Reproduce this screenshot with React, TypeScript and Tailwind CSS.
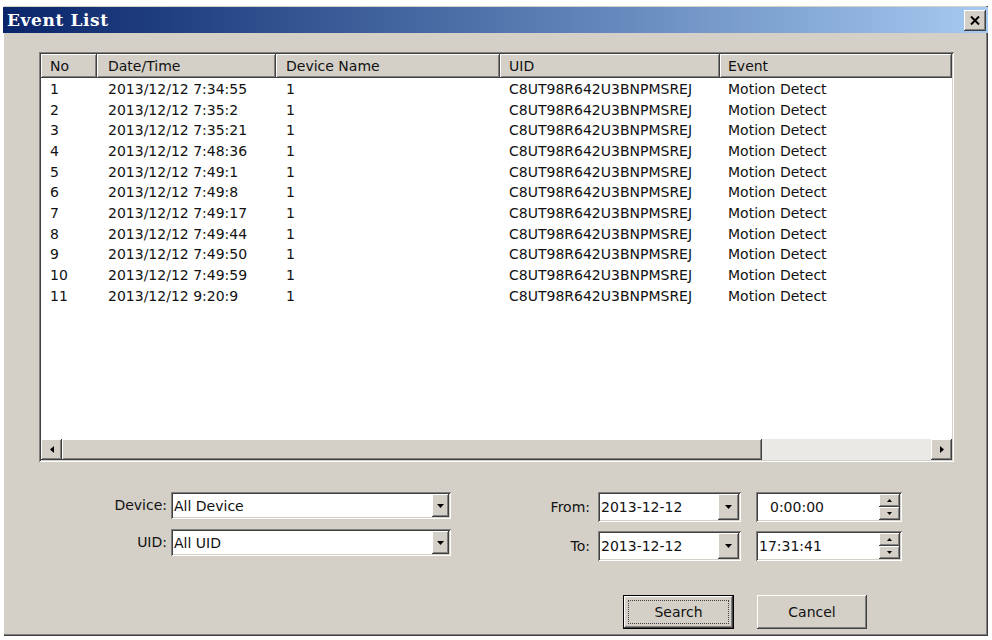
import React from 'react';

const raised =
  'bg-[#d4d0c8] shadow-[inset_-1px_-1px_0_#404040,inset_1px_1px_0_#ffffff,inset_-2px_-2px_0_#808080,inset_2px_2px_0_#d4d0c8]';
const sunken =
  'shadow-[inset_1px_1px_0_#808080,inset_-1px_-1px_0_#ffffff,inset_2px_2px_0_#404040,inset_-2px_-2px_0_#d4d0c8]';

const events = [
  ['1', '2013/12/12 7:34:55'],
  ['2', '2013/12/12 7:35:2'],
  ['3', '2013/12/12 7:35:21'],
  ['4', '2013/12/12 7:48:36'],
  ['5', '2013/12/12 7:49:1'],
  ['6', '2013/12/12 7:49:8'],
  ['7', '2013/12/12 7:49:17'],
  ['8', '2013/12/12 7:49:44'],
  ['9', '2013/12/12 7:49:50'],
  ['10', '2013/12/12 7:49:59'],
  ['11', '2013/12/12 9:20:9'],
];

const columns = [
  { label: 'No', cls: 'w-[56px] pl-[9px]' },
  { label: 'Date/Time', cls: 'w-[179px] pl-[11px]' },
  { label: 'Device Name', cls: 'w-[224px] pl-[10px]' },
  { label: 'UID', cls: 'w-[220px] pl-[9px]' },
  { label: 'Event', cls: 'flex-1 pl-[8px]' },
];

const Arrow: React.FC<{ dir: 'left' | 'right' | 'down' | 'up'; small?: boolean }> = ({ dir, small }) => {
  const pts = small
    ? { up: '0,3 5,3 2.5,0', down: '0,0 5,0 2.5,3', left: '3,0 3,5 0,2.5', right: '0,0 0,5 3,2.5' }[dir]
    : { up: '0,4 7,4 3.5,0', down: '0,0 7,0 3.5,4', left: '4,0 4,7 0,3.5', right: '0,0 0,7 4,3.5' }[dir];
  const horiz = dir === 'left' || dir === 'right';
  const w = small ? (horiz ? 3 : 5) : horiz ? 4 : 7;
  const h = small ? (horiz ? 5 : 3) : horiz ? 7 : 4;
  return (
    <svg width={w} height={h} viewBox={`0 0 ${w} ${h}`}>
      <polygon points={pts} fill="#000" />
    </svg>
  );
};

const ComboBox: React.FC<{ value: string; className: string; btn: string }> = ({ value, className, btn }) => (
  <div className={`relative flex items-center bg-white ${sunken} ${className}`}>
    <span className="pl-[3px] pt-[1px]">{value}</span>
    <div className={`ml-auto mr-[2px] self-stretch my-[2px] flex items-center justify-center ${raised} ${btn}`}>
      <Arrow dir="down" />
    </div>
  </div>
);

const TimeBox: React.FC<{ value: string; pad: string }> = ({ value, pad }) => (
  <div className={`flex items-center bg-white w-[146px] h-[30px] ${sunken}`}>
    <span className={pad}>{value}</span>
    <div className="ml-auto mr-[2px] my-[2px] self-stretch w-[21px] flex flex-col">
      <div className={`flex-1 flex items-center justify-center ${raised}`}>
        <Arrow dir="up" small />
      </div>
      <div className={`flex-1 flex items-center justify-center ${raised}`}>
        <Arrow dir="down" small />
      </div>
    </div>
  </div>
);

export default function App() {
  return (
    <div className="w-[992px] h-[640px] bg-white pt-[6px] pl-[3px] text-[14px] text-[#111] font-['DejaVu_Sans',sans-serif]">
      <div className="w-[985px] h-[630px] flex flex-col bg-[#d4d0c8] shadow-[inset_1px_0_0_#ffffff,inset_-1px_-1px_0_#404040,inset_-2px_-2px_0_#808080]">
        {/* Title bar */}
        <div className="mt-[1px] h-[26px] flex items-center bg-gradient-to-r from-[#0a246a] to-[#a6caf0]">
          <span className="pl-[4px] pt-[2px] text-white font-bold text-[17px] tracking-[0.6px] font-['DejaVu_Serif',serif]">
            Event List
          </span>
          <div className={`ml-auto mr-[2px] w-[22px] h-[21px] flex items-center justify-center ${raised}`}>
            <svg width="10" height="9" viewBox="0 0 10 9">
              <path d="M1 0.5 L9 8.5 M9 0.5 L1 8.5" stroke="#000" strokeWidth="2" />
            </svg>
          </div>
        </div>

        {/* Event list */}
        <div className={`ml-[36px] mt-[19px] w-[915px] h-[410px] bg-white p-[2px] flex flex-col ${sunken}`}>
          <div className="flex h-[24px] shrink-0">
            {columns.map((c) => (
              <div key={c.label} className={`flex items-center pt-[1px] ${raised} ${c.cls}`}>
                {c.label}
              </div>
            ))}
          </div>
          <div className="flex-1 pt-[1px]">
            {events.map(([no, time]) => (
              <div key={no} className="flex h-[20.7px] items-center">
                <div className={columns[0].cls}>{no}</div>
                <div className={columns[1].cls}>{time}</div>
                <div className={columns[2].cls}>1</div>
                <div className={columns[3].cls}>C8UT98R642U3BNPMSREJ</div>
                <div className={columns[4].cls}>Motion Detect</div>
              </div>
            ))}
          </div>
          {/* Horizontal scrollbar */}
          <div className="flex h-[21px] shrink-0 bg-[#ebe9e5]">
            <div className={`w-[21px] flex items-center justify-center ${raised}`}>
              <Arrow dir="left" />
            </div>
            <div className={`w-[700px] ${raised}`} />
            <div className="flex-1" />
            <div className={`w-[21px] flex items-center justify-center ${raised}`}>
              <Arrow dir="right" />
            </div>
          </div>
        </div>

        {/* Filters */}
        <div className="mt-[30px] pl-[97px] flex items-start">
          <div className="grid grid-cols-[67px_280px] gap-x-[4px] gap-y-[10px] items-center">
            <span className="text-right">Device:</span>
            <ComboBox value="All Device" className="h-[27px]" btn="w-[17px]" />
            <span className="text-right">UID:</span>
            <ComboBox value="All UID" className="h-[27px]" btn="w-[17px]" />
          </div>
          <div className="ml-[89px] flex flex-col gap-[9px]">
            <div className="flex items-center">
              <span className="w-[50px] text-right">From:</span>
              <ComboBox value="2013-12-12" className="ml-[8px] w-[143px] h-[30px]" btn="w-[21px]" />
              <div className="ml-[15px]">
                <TimeBox value="0:00:00" pad="pl-[14px]" />
              </div>
            </div>
            <div className="flex items-center">
              <span className="w-[50px] text-right">To:</span>
              <ComboBox value="2013-12-12" className="ml-[8px] w-[143px] h-[30px]" btn="w-[21px]" />
              <div className="ml-[15px]">
                <TimeBox value="17:31:41" pad="pl-[3px]" />
              </div>
            </div>
          </div>
        </div>

        {/* Actions */}
        <div className="mt-[34px] pl-[620px] flex gap-[23px]">
          <button className="w-[111px] h-[34px] border border-black p-0 flex">
            <div className={`flex-1 flex items-center justify-center p-[4px] ${raised}`}>
              <div className="w-full h-full flex items-center justify-center border border-dotted border-[#404040]">
                Search
              </div>
            </div>
          </button>
          <button className={`w-[110px] h-[34px] flex items-center justify-center ${raised}`}>Cancel</button>
        </div>
      </div>
    </div>
  );
}
